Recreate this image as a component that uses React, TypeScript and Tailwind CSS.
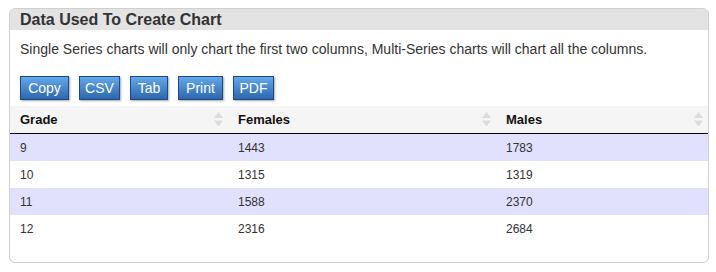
import React from "react";

const rows = [
  ["9", "1443", "1783"],
  ["10", "1315", "1319"],
  ["11", "1588", "2370"],
  ["12", "2316", "2684"],
];

function SortIcon() {
  return (
    <svg width="9" height="15" viewBox="0 0 9 15" className="shrink-0">
      <polygon points="4.5,0 9,6 0,6" fill="#dcdcdc" />
      <polygon points="0,8.5 9,8.5 4.5,14.5" fill="#dcdcdc" />
    </svg>
  );
}

function Btn({ label, w }: { label: string; w: string }) {
  return (
    <button className={w + " h-[24px] flex items-center justify-center border border-[#1b4b86] bg-gradient-to-b from-[#64a8ec] to-[#2d67ad] text-white text-[14px] leading-none shadow-[1px_1px_2px_rgba(0,0,0,0.35)]"}>
      {label}
    </button>
  );
}

export default function App() {
  return (
    <div className="w-[716px] h-[272px] bg-white pt-[8px] pl-[9px] pr-[7px]" style={{ fontFamily: '"Liberation Sans", Arial, sans-serif' }}>
      <div className="h-[255px] border border-[#cfcfcf] rounded-[6px] overflow-hidden flex flex-col">
        <div className="h-[21px] bg-[#e3e3e3] pl-[10px] flex items-center text-[16px] font-bold text-[#333] leading-none">
          Data Used To Create Chart
        </div>
        <div className="pl-[10px] pt-[11px] text-[14px] text-[#333] leading-[17px]">
          Single Series charts will only chart the first two columns, Multi-Series charts will chart all the columns.
        </div>
        <div className="pl-[10px] pt-[18px] flex gap-[10px]">
          <Btn label="Copy" w="w-[49px]" />
          <Btn label="CSV" w="w-[41px]" />
          <Btn label="Tab" w="w-[38px]" />
          <Btn label="Print" w="w-[45px]" />
          <Btn label="PDF" w="w-[41px]" />
        </div>
        <div className="mt-[6px] grid grid-cols-[218px_268px_1fr]">
          {["Grade", "Females", "Males"].map((h) => (
            <div key={h} className="h-[28px] bg-[#f5f5f5] border-b border-black flex items-center justify-between pl-[10px] pr-[5px] text-[13px] font-bold text-[#111]">
              <span>{h}</span>
              <SortIcon />
            </div>
          ))}
          {rows.map((r, i) =>
            r.map((c, j) => (
              <div
                key={i + "-" + j}
                className={
                  "h-[27px] flex items-center pl-[10px] text-[12px] text-[#333] " +
                  (i % 2 === 0 ? "bg-[#e1e1fd]" : "bg-white")
                }
              >
                {c}
              </div>
            ))
          )}
        </div>
      </div>
    </div>
  );
}
